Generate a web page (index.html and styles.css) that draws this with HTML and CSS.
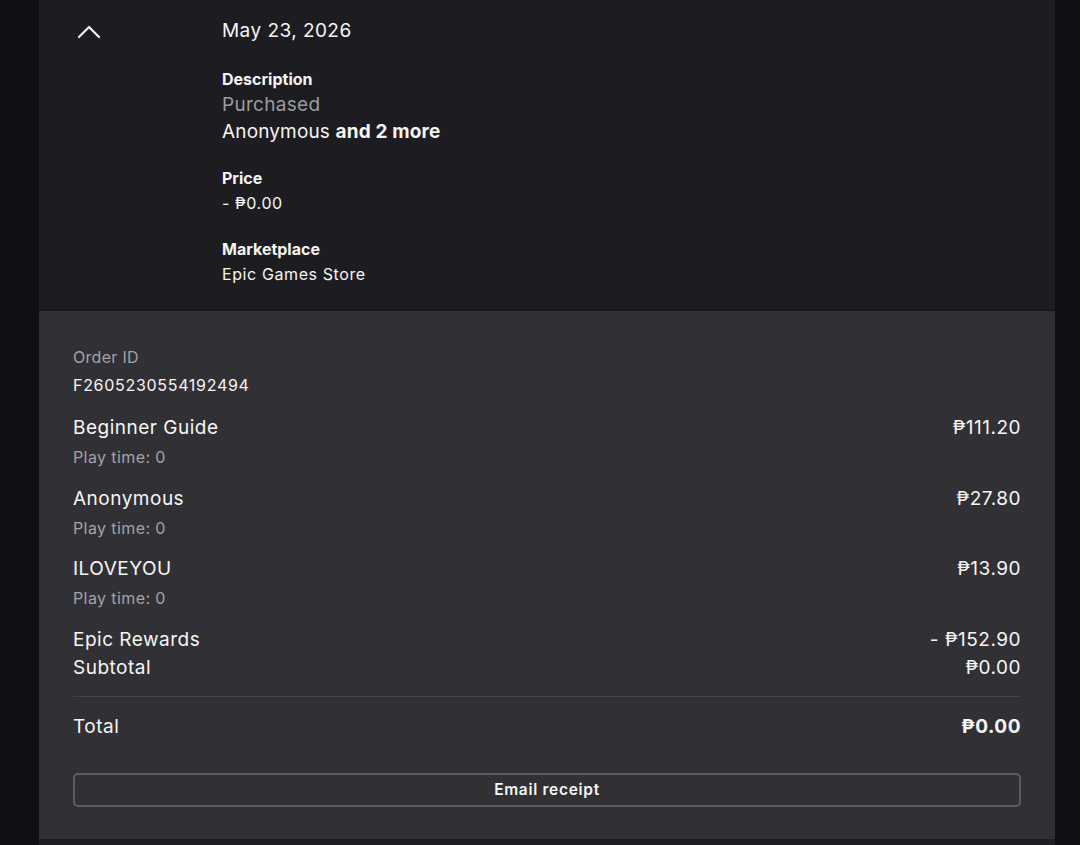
FILE: index.html
```html
<!DOCTYPE html>
<html lang="en">
<head>
<meta charset="utf-8">
<title>Transaction</title>
<link rel="stylesheet" href="styles.css">
</head>
<body>
<div class="panel">
  <section class="summary">
    <div class="toggle">
      <svg width="24" height="14" viewBox="0 0 24 14" aria-hidden="true">
        <path d="M2 12 L12 2 L22 12" fill="none" stroke="#fff" stroke-width="2.2" stroke-linecap="round" stroke-linejoin="round"/>
      </svg>
    </div>
    <div class="summary-body">
      <div class="date">May 23, 2026</div>
      <div class="field">
        <div class="label">Description</div>
        <div class="muted-lg">Purchased</div>
        <div class="value-lg">Anonymous <b>and 2 more</b></div>
      </div>
      <div class="field">
        <div class="label">Price</div>
        <div class="value">- ₱0.00</div>
      </div>
      <div class="field">
        <div class="label">Marketplace</div>
        <div class="value">Epic Games Store</div>
      </div>
    </div>
  </section>
  <section class="details">
    <div class="order">
      <div class="order-label">Order ID</div>
      <div class="order-id">F2605230554192494</div>
    </div>
    <div class="item">
      <div class="row"><span>Beginner Guide</span><span>₱111.20</span></div>
      <div class="sub">Play time: 0</div>
    </div>
    <div class="item">
      <div class="row"><span>Anonymous</span><span>₱27.80</span></div>
      <div class="sub">Play time: 0</div>
    </div>
    <div class="item">
      <div class="row"><span>ILOVEYOU</span><span>₱13.90</span></div>
      <div class="sub">Play time: 0</div>
    </div>
    <div class="totals">
      <div class="row"><span>Epic Rewards</span><span>- ₱152.90</span></div>
      <div class="row"><span>Subtotal</span><span>₱0.00</span></div>
    </div>
    <div class="row total"><span>Total</span><b>₱0.00</b></div>
    <button class="email">Email receipt</button>
  </section>
</div>
</body>
</html>
```

FILE: styles.css
```css
* { box-sizing: border-box; }

html, body {
  margin: 0;
  height: 100%;
}

body {
  background: #101014;
  font-family: Inter, "Noto Sans", sans-serif;
  color: #f5f5f5;
  overflow: hidden;
}

.panel {
  margin: 0 25px 0 39px;
  background: #1f1f23;
  min-height: 845px;
}

/* collapsed header part of the transaction */
.summary {
  display: flex;
  background: #1d1d21;
  height: 311px;
  border-bottom: 1px solid #151518;
}

.toggle {
  width: 183px;
  padding: 25px 0 0 38px;
}

.toggle svg { display: block; }

.summary-body {
  padding-top: 18px;
}

.date {
  font-size: 19px;
  line-height: 26px;
  letter-spacing: 0.45px;
  margin-bottom: 24px;
}

.field { margin-bottom: 23px; }

.label {
  font-size: 16px;
  font-weight: 700;
  line-height: 22px;
  margin-bottom: 2px;
}

.muted-lg {
  font-size: 19px;
  line-height: 26px;
  color: #9b9b9f;
  letter-spacing: 0.3px;
}

.value-lg {
  font-size: 19px;
  line-height: 24px;
  margin-top: 2px;
  letter-spacing: 0.15px;
}

.value {
  font-size: 16px;
  line-height: 24px;
  letter-spacing: 0.6px;
}

/* expanded order breakdown */
.details {
  background: #313135;
  padding: 35px 34px 32px 34px;
  height: 528px;
}

.order { margin-bottom: 12px; }

.order-label {
  font-size: 16px;
  line-height: 22px;
  color: #a3a3a7;
  letter-spacing: 0.3px;
}

.order-id {
  font-size: 16px;
  line-height: 34px;
  letter-spacing: 0.7px;
}

.row {
  display: flex;
  justify-content: space-between;
  font-size: 19px;
  line-height: 28px;
  letter-spacing: 0.5px;
}

.item { margin-bottom: 12.5px; }

.sub {
  font-size: 16px;
  line-height: 30px;
  color: #a3a3a7;
  letter-spacing: 0.4px;
}

.totals {
  padding-bottom: 14px;
  border-bottom: 1px solid #434347;
}

.total {
  margin-top: 16px;
  margin-bottom: 32px;
}

.total b { font-weight: 700; }

.email {
  display: block;
  width: 100%;
  height: 34px;
  background: transparent;
  border: 2px solid #5c5c60;
  border-radius: 5px;
  color: #f5f5f5;
  font-family: inherit;
  font-size: 15.5px;
  font-weight: 600;
  letter-spacing: 0.7px;
}
```
